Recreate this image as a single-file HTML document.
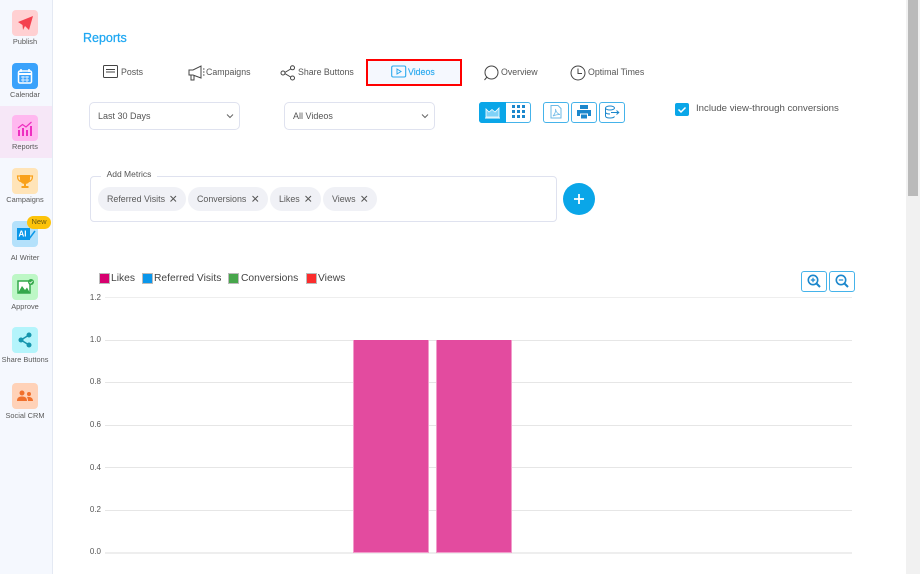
<!DOCTYPE html>
<html><head><meta charset="utf-8"><style>
html,body{margin:0;padding:0;width:920px;height:574px;overflow:hidden;background:#fff}
body{font-family:"Liberation Sans",sans-serif;color:#555;position:relative}
.a{position:absolute}
.t{position:absolute;white-space:nowrap;line-height:12px}
.ic{position:absolute;left:12px;width:26px;height:26px;border-radius:4px}
.nl{position:absolute;left:0;width:50px;text-align:center;font-size:7.4px;line-height:10px;color:#5a5a5a;white-space:nowrap}
.tab{position:absolute;font-size:8.8px;line-height:12px;color:#555;white-space:nowrap;top:66px}
svg{position:absolute;overflow:visible}
.btn{position:absolute;border:1px solid #45b3ea;border-radius:3px;box-sizing:border-box;background:#fff}
.sel{position:absolute;top:102px;height:28px;border:1px solid #dfe2ef;border-radius:5px;box-sizing:border-box;background:#fff;font-size:9px;line-height:26px;padding-left:8px;color:#555}
.chip{position:absolute;top:187px;height:24px;border-radius:12px;background:#f0f1f6;font-size:8.900px;line-height:24px;color:#5a5a5a;white-space:nowrap}
.chip span{position:absolute;top:0;white-space:nowrap}
.grid{position:absolute;left:105px;width:747px;height:1px;background:#e6e6e6}
.yl{position:absolute;left:80px;width:21px;text-align:right;font-size:8px;line-height:10px;color:#555}
.lg{position:absolute;top:273px;font-size:10.3px;line-height:12px;color:#444;white-space:nowrap}
.sw{position:absolute;top:273px;width:9px;height:9px;border:.5px solid #bbb}
.t,.nl,.tab,.chip span,.lg,.yl,.sel,svg{filter:blur(.25px)}
</style></head><body>
<div class="a" style="left:0;top:0;width:53px;height:574px;background:#f5f8fe;border-right:1px solid #e4e9f3;box-sizing:border-box"></div>
<div class="a" style="left:0;top:106px;width:52px;height:52px;background:#f6e7f7"></div>

<div class="ic" style="top:10px;background:#ffd0d2"></div>
<svg style="left:12px;top:10px" width="26" height="26" viewBox="0 0 26 26"><path d="M6 12L21 6L17 20L13 16L11 20L10.500 15Z" fill="#f4414f"/></svg>
<div class="nl" style="top:37px">Publish</div>

<div class="ic" style="top:63px;background:#3aa2fb"></div>
<svg style="left:12px;top:63px" width="26" height="26" viewBox="0 0 26 26"><rect x="6.500" y="8" width="13" height="12" rx="1.500" fill="none" stroke="#fff" stroke-width="1.500"/><path d="M6.500 10H19.500V12H6.500Z" fill="#fff"/><path d="M9 6V9M17 6V9" stroke="#fff" stroke-width="1.500"/><path d="M9 14H17M9 17H17M11 13V19M15 13V19" stroke="#d8ecff" stroke-width="1"/></svg>
<div class="nl" style="top:90px">Calendar</div>

<div class="ic" style="top:115px;background:#ffb8ef"></div>
<svg style="left:12px;top:115px" width="26" height="26" viewBox="0 0 26 26"><path d="M7 15h2v6H7zM11 13h2v8h-2zM15 15h2v6h-2zM19 11h2v10h-2z" fill="#ee2fc0" transform="translate(-1,0)"/><path d="M6 13L10.500 9.500L14 12L19.500 7" fill="none" stroke="#ee2fc0" stroke-width="1.200"/></svg>
<div class="nl" style="top:142px">Reports</div>

<div class="ic" style="top:168px;background:#ffe4b8"></div>
<svg style="left:12px;top:168px" width="26" height="26" viewBox="0 0 26 26"><path d="M8 7H18V11C18 14 16 16 13 16C10 16 8 14 8 11Z" fill="#f9a11b"/><path d="M8 8H5.500C5.500 11 6.500 13 9 13.500M18 8H20.500C20.500 11 19.500 13 17 13.500" fill="none" stroke="#f9a11b" stroke-width="1.200"/><path d="M12 15h2v3h-2zM9.500 18h7v2h-7z" fill="#f9a11b"/></svg>
<div class="nl" style="top:195px">Campaigns</div>

<div class="ic" style="top:221px;background:#b4e1fb"></div>
<svg style="left:12px;top:221px" width="26" height="26" viewBox="0 0 26 26"><path d="M5 7H18V19H5Z" fill="#0a97e8"/><path d="M17 18L23 10" stroke="#0a97e8" stroke-width="1.500"/><text x="6.500" y="15.500" font-family="Liberation Sans" font-size="8" font-weight="700" fill="#fff">AI</text></svg>
<div class="a" style="left:27px;top:216px;width:24px;height:13px;border-radius:7px;background:#fcc30b;color:#6b5a10;font-size:7.5px;line-height:12px;text-align:center">New</div>
<div class="nl" style="top:253px">AI Writer</div>

<div class="ic" style="top:274px;background:#bdf7c6"></div>
<svg style="left:12px;top:274px" width="26" height="26" viewBox="0 0 26 26"><path d="M6 7H18V19H6Z" fill="#fff" stroke="#35a84b" stroke-width="1.500"/><path d="M6 19L10 12L13 16L15 13.500L18 19Z" fill="#35a84b"/><circle cx="19" cy="8" r="3" fill="#35a84b"/><path d="M17.500 8L18.700 9.200L20.500 7" stroke="#fff" fill="none" stroke-width=".8"/></svg>
<div class="nl" style="top:302px">Approve</div>

<div class="ic" style="top:327px;background:#b4f4fb"></div>
<svg style="left:12px;top:327px" width="26" height="26" viewBox="0 0 26 26"><path d="M17 8L9 13L17 18" fill="none" stroke="#1695ad" stroke-width="1.500"/><circle cx="17" cy="8" r="2.500" fill="#1695ad"/><circle cx="9" cy="13" r="2.500" fill="#1695ad"/><circle cx="17" cy="18" r="2.500" fill="#1695ad"/></svg>
<div class="nl" style="top:355px">Share Buttons</div>

<div class="ic" style="top:383px;background:#ffd2b8"></div>
<svg style="left:12px;top:383px" width="26" height="26" viewBox="0 0 26 26"><circle cx="10" cy="10" r="2.500" fill="#f0702c"/><circle cx="17" cy="11" r="2" fill="#f0702c"/><path d="M5 18C5 14.500 7 13.500 10 13.500C13 13.500 15 14.500 15 18ZM16 18C16 16 15.500 15 15 14C18 13.500 21 14.500 21 18Z" fill="#f0702c"/></svg>
<div class="nl" style="top:411px">Social CRM</div>

<div class="t" style="left:83px;top:31px;font-size:12.500px;line-height:14px;color:#1ea7f2;-webkit-text-stroke:.25px #1ea7f2">Reports</div>

<svg style="left:103px;top:65px" width="16" height="15" viewBox="0 0 16 15"><rect x=".5" y=".5" width="14" height="12" rx="1" fill="none" stroke="#444"/><path d="M3 4.500H12M3 7H12" stroke="#444"/></svg>
<div class="tab" style="left:121px">Posts</div>
<svg style="left:188px;top:65px" width="18" height="16" viewBox="0 0 18 16"><path d="M1 5H5L13 1V13L5 10H1ZM3 10V15H6V10.500" fill="none" stroke="#444"/><path d="M15 4h1.500M15 7h1.500M15 10h1.500" stroke="#444"/></svg>
<div class="tab" style="left:206px">Campaigns</div>
<svg style="left:280px;top:65px" width="16" height="16" viewBox="0 0 16 16"><path d="M11.500 3.500L4 8L11.500 12.500" fill="none" stroke="#444"/><circle cx="12.500" cy="2.800" r="2" fill="#fff" stroke="#444"/><circle cx="3" cy="8" r="2" fill="#fff" stroke="#444"/><circle cx="12.500" cy="13" r="2" fill="#fff" stroke="#444"/></svg>
<div class="tab" style="left:298px">Share Buttons</div>

<div class="a" style="left:366px;top:59px;width:96px;height:27px;border:2px solid #f00;box-sizing:border-box;background:#f5f8fe"></div>
<svg style="left:391px;top:65px" width="16" height="14" viewBox="0 0 16 14"><rect x=".7" y="1" width="14" height="11" rx="1.500" fill="none" stroke="#2aa9ee" stroke-width="1.100"/><path d="M6 4L10 6.500L6 9Z" fill="none" stroke="#2aa9ee"/></svg>
<div class="tab" style="left:408px;color:#2aa9ee;-webkit-text-stroke:.15px #2aa9ee">Videos</div>

<svg style="left:483px;top:65px" width="17" height="17" viewBox="0 0 17 17"><circle cx="8.500" cy="7.500" r="6.500" fill="none" stroke="#444"/><path d="M4 12L1.500 15" stroke="#444"/></svg>
<div class="tab" style="left:501px">Overview</div>
<svg style="left:570px;top:65px" width="16" height="16" viewBox="0 0 16 16"><circle cx="8" cy="8" r="7" fill="none" stroke="#444"/><path d="M8 3.500V8.500H12" fill="none" stroke="#444"/></svg>
<div class="tab" style="left:588px">Optimal Times</div>

<div class="sel" style="left:89px;width:151px">Last 30 Days</div>
<svg style="left:226px;top:113px" width="8" height="6" viewBox="0 0 8 6"><path d="M1 1.500L4 4.500L7 1.500" fill="none" stroke="#666"/></svg>
<div class="sel" style="left:284px;width:151px">All Videos</div>
<svg style="left:421px;top:113px" width="8" height="6" viewBox="0 0 8 6"><path d="M1 1.500L4 4.500L7 1.500" fill="none" stroke="#666"/></svg>

<div class="btn" style="left:479px;top:102px;width:52px;height:21px"></div>
<div class="a" style="left:479px;top:102px;width:27px;height:21px;background:#0aa6e8;border-radius:3px 0 0 3px"></div>
<svg style="left:485px;top:106px" width="15" height="13" viewBox="0 0 15 13"><path d="M1 11V3L4 6L7 3.500L10 6L14 2V11Z" fill="#7fd2f7" stroke="#fff" stroke-width=".8"/><path d="M0 12H15" stroke="#fff"/></svg>
<svg style="left:512px;top:105px" width="13" height="13" viewBox="0 0 13 13" fill="#1b87cc"><rect x="0" y="0" width="3" height="3"/><rect x="5" y="0" width="3" height="3"/><rect x="10" y="0" width="3" height="3"/><rect x="0" y="5" width="3" height="3"/><rect x="5" y="5" width="3" height="3"/><rect x="10" y="5" width="3" height="3"/><rect x="0" y="10" width="3" height="3"/><rect x="5" y="10" width="3" height="3"/><rect x="10" y="10" width="3" height="3"/></svg>

<div class="btn" style="left:543px;top:102px;width:26px;height:21px"></div>
<svg style="left:550px;top:105px" width="12" height="14" viewBox="0 0 12 14"><path d="M1 .5H8L11 3.500V13H1Z" fill="none" stroke="#6cb9e6"/><path d="M3 11C5 9 6 6 5.500 4C6 7 8 9 10 9.500C7.500 9.500 5 10 3 11Z" fill="none" stroke="#6cb9e6" stroke-width=".8"/></svg>
<div class="btn" style="left:571px;top:102px;width:26px;height:21px"></div>
<svg style="left:577px;top:105px" width="14" height="14" viewBox="0 0 14 14"><path d="M3 0H11V4H3Z" fill="#1b87cc"/><path d="M0 5H14V11H11V8.500H3V11H0Z" fill="#1b87cc"/><path d="M4 9.500H10V13.500H4Z" fill="#1b87cc"/></svg>
<div class="btn" style="left:599px;top:102px;width:26px;height:21px"></div>
<svg style="left:605px;top:105px" width="15" height="14" viewBox="0 0 15 14"><ellipse cx="5" cy="3" rx="4.500" ry="2" fill="none" stroke="#1b87cc"/><path d="M.5 3V11C.5 12.500 3 13 5 13C7 13 9 12.500 9.500 11.500M.5 7C.5 8.500 3 9 5 9" fill="none" stroke="#1b87cc"/><path d="M6 7.500H13.500M11.500 5.500L13.800 7.500L11.500 9.500" fill="none" stroke="#1b87cc"/></svg>

<div class="a" style="left:675px;top:103px;width:14px;height:13px;background:#0aa6e8;border-radius:2px"></div>
<svg style="left:675px;top:103px" width="14" height="13" viewBox="0 0 14 13"><path d="M3.500 6.500L6 9L10.500 4.500" fill="none" stroke="#fff" stroke-width="1.500"/></svg>
<div class="t" style="left:696px;top:103px;font-size:9.630px;color:#555">Include view-through conversions</div>

<div class="a" style="left:90px;top:176px;width:467px;height:46px;border:1px solid #dfe2ef;border-radius:4px;box-sizing:border-box"></div>
<div class="a" style="left:101px;top:170px;width:56px;height:12px;background:#fff;font-size:8.500px;line-height:9px;text-align:center;color:#555;">Add Metrics</div>

<div class="chip" style="left:98px;width:88px"><span style="left:9px">Referred Visits</span></div>
<div class="chip" style="left:188px;width:80px"><span style="left:9px">Conversions</span></div>
<div class="chip" style="left:270px;width:51px"><span style="left:9px">Likes</span></div>
<div class="chip" style="left:323px;width:54px"><span style="left:9px">Views</span></div>
<svg style="left:0;top:0" width="920" height="574"><path d="M170.500 196L176 201.500M176 196L170.500 201.500M252.500 196L258 201.500M258 196L252.500 201.500M305.500 196L311 201.500M311 196L305.500 201.500M361.500 196L367 201.500M367 196L361.500 201.500" stroke="#555" stroke-width="1" fill="none"/></svg>

<div class="a" style="left:563px;top:183px;width:32px;height:32px;border-radius:50%;background:#0aa6e8"></div>
<svg style="left:563px;top:183px" width="32" height="32" viewBox="0 0 32 32"><path d="M16 11V21M11 16H21" stroke="#fff" stroke-width="1.800"/></svg>

<div class="sw" style="left:99px;background:#d6006f"></div><div class="lg" style="left:111px">Likes</div>
<div class="sw" style="left:142px;background:#0a96ea"></div><div class="lg" style="left:154px">Referred Visits</div>
<div class="sw" style="left:228px;background:#47a64b"></div><div class="lg" style="left:241px">Conversions</div>
<div class="sw" style="left:306px;background:#fb2d2d"></div><div class="lg" style="left:318px">Views</div>

<div class="btn" style="left:801px;top:271px;width:26px;height:21px"></div>
<svg style="left:807px;top:274px" width="14" height="14" viewBox="0 0 14 14"><circle cx="6" cy="6" r="4.700" fill="none" stroke="#1b87cc" stroke-width="1.600"/><path d="M9.500 9.500L13 13" stroke="#1b87cc" stroke-width="2"/><path d="M3.800 6H8.200M6 3.800V8.200" stroke="#1b87cc" stroke-width="1.200"/></svg>
<div class="btn" style="left:829px;top:271px;width:26px;height:21px"></div>
<svg style="left:835px;top:274px" width="14" height="14" viewBox="0 0 14 14"><circle cx="6" cy="6" r="4.700" fill="none" stroke="#1b87cc" stroke-width="1.600"/><path d="M9.500 9.500L13 13" stroke="#1b87cc" stroke-width="2"/><path d="M3.800 6H8.200" stroke="#1b87cc" stroke-width="1.200"/></svg>

<div class="grid" style="top:297px;background:#eee"></div><div class="yl" style="top:293px">1.2</div>
<div class="grid" style="top:340px"></div><div class="yl" style="top:335px">1.0</div>
<div class="grid" style="top:382px"></div><div class="yl" style="top:377px">0.8</div>
<div class="grid" style="top:425px"></div><div class="yl" style="top:420px">0.6</div>
<div class="grid" style="top:467px"></div><div class="yl" style="top:463px">0.4</div>
<div class="grid" style="top:510px"></div><div class="yl" style="top:505px">0.2</div>
<div class="grid" style="top:552px;height:2px;background:#eee"></div><div class="yl" style="top:547px">0.0</div>

<div class="a" style="left:353px;top:340px;width:76px;height:213px;background:#e34b9f;border:1px solid #f19ccb;border-top:0;box-sizing:border-box"></div>
<div class="a" style="left:436px;top:340px;width:76px;height:213px;background:#e34b9f;border:1px solid #f19ccb;border-top:0;box-sizing:border-box"></div>

<div class="a" style="left:906px;top:0;width:14px;height:574px;background:#f1f1f1"></div>
<div class="a" style="left:908px;top:0;width:10px;height:196px;background:#bababa"></div>
</body></html>
